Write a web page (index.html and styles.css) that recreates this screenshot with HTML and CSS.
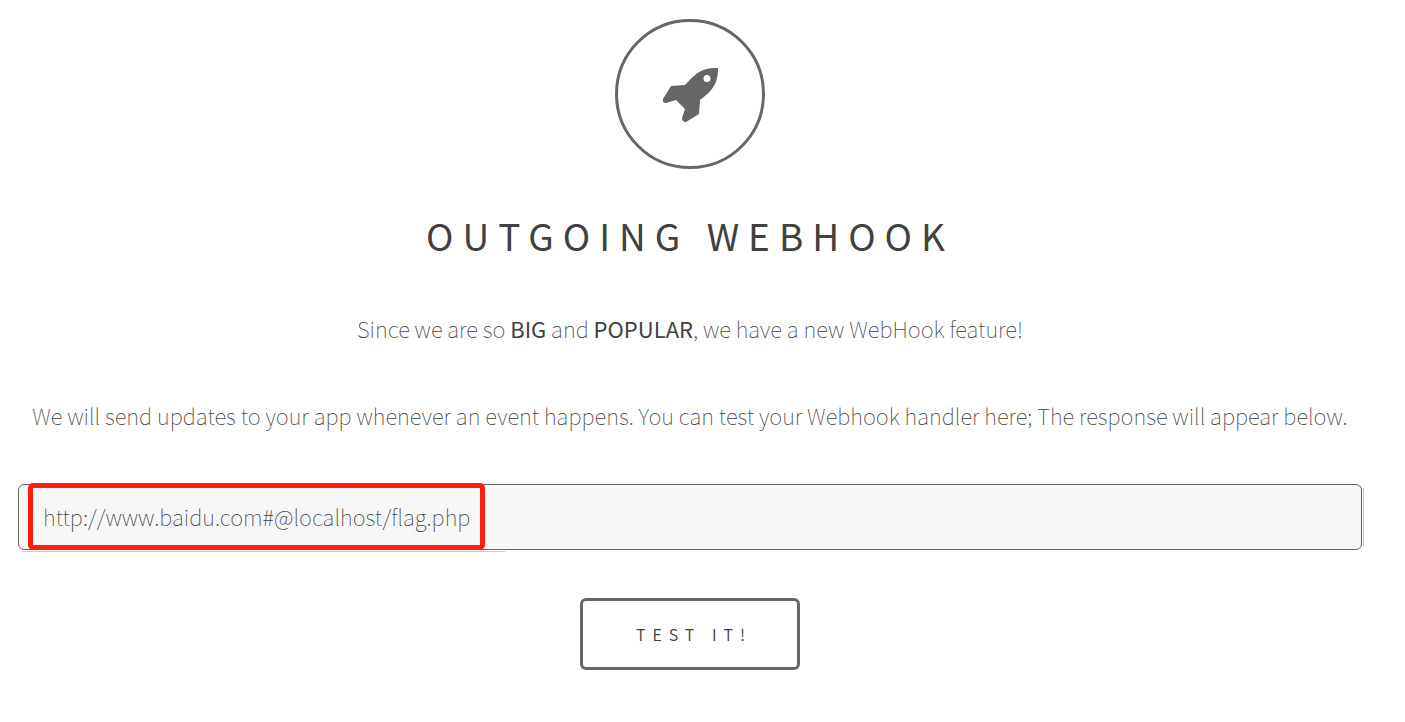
FILE: index.html
```html
<!DOCTYPE html>
<html lang="en">
<head>
    <meta charset="UTF-8">
    <meta name="viewport" content="width=device-width, initial-scale=1.0">
    <title>Outgoing Webhook</title>
    <link rel="stylesheet" href="styles.css">
</head>
<body>
    <main class="container">
        <div class="logo">
            <svg class="rocket" viewBox="0 0 56 56" aria-hidden="true">
                <path fill-rule="evenodd" d="M56 2C42 1 34 6 23 19L9 20L1 33Q0 37 4 37L14 34L23 43L20 52Q20 56 24 56L37 48L38 34C52 24 56 16 56 2ZM45 9A3.500 3.500 0 1 1 45 16A3.500 3.500 0 1 1 45 9Z"/>
            </svg>
        </div>

        <h1>Outgoing Webhook</h1>
        <p>Since we are so <strong>BIG</strong> and <strong>POPULAR</strong>, we have a new WebHook feature!</p>
        <p>We will send updates to your app whenever an event happens. You can test your Webhook handler here; The response will appear below.</p>

        <form>
            <div class="field">
                <input type="text" name="url" aria-label="Webhook handler" value="http://www.baidu.com#@localhost/flag.php" autocomplete="off" spellcheck="false">
                <span class="highlight"></span>
            </div>
            <button type="button">Test it!</button>
        </form>
    </main>
</body>
</html>
```

FILE: styles.css
```css
* {
    margin: 0;
    padding: 0;
    box-sizing: border-box;
}

body {
    font-family: "Noto Sans CJK SC", "Noto Sans", sans-serif;
    font-size: 22px;
    font-weight: 100;
    line-height: 40px;
    color: #414141;
    background-color: #fff;
}

.container {
    padding: 19px 43px 40px 18px;
    text-align: center;
}

.logo {
    display: flex;
    align-items: center;
    justify-content: center;
    width: 150px;
    height: 150px;
    margin: 0 auto 38px;
    border: 3px solid #666;
    border-radius: 50%;
}

.rocket {
    width: 56px;
    height: 56px;
    fill: #666;
}

h1 {
    margin-bottom: 45px;
    font-size: 37px;
    font-weight: 400;
    line-height: 56px;
    letter-spacing: 9px;
    text-transform: uppercase;
}

p {
    margin-bottom: 47px;
}

strong {
    font-weight: 400;
}

.field {
    position: relative;
    margin-top: 49px;
    margin-bottom: 48px;
}

/* pink trim under and beside the field */
.field::before,
.field::after {
    content: "";
    position: absolute;
    background-color: #ffb3c4;
}

.field::before {
    left: 4px;
    bottom: -2px;
    width: 483px;
    height: 1px;
}

.field::after {
    top: 4px;
    right: -2px;
    bottom: 4px;
    width: 1px;
}

input {
    display: block;
    width: 100%;
    height: 66px;
    padding: 0 24px 2px;
    border: 1px solid #666;
    border-radius: 6px;
    background-color: #f7f7f7;
    color: inherit;
    font: inherit;
}

.highlight {
    position: absolute;
    top: -1px;
    left: 10px;
    width: 457px;
    height: 67px;
    border: 5px solid #ff1e10;
    border-radius: 5px;
    pointer-events: none;
}

button {
    height: 72px;
    padding: 0 45px 0 53px;
    border: 3px solid #666;
    border-radius: 6px;
    background-color: #fff;
    color: inherit;
    font: inherit;
    font-size: 16px;
    font-weight: 350;
    letter-spacing: 7px;
    text-transform: uppercase;
    cursor: pointer;
}
```
